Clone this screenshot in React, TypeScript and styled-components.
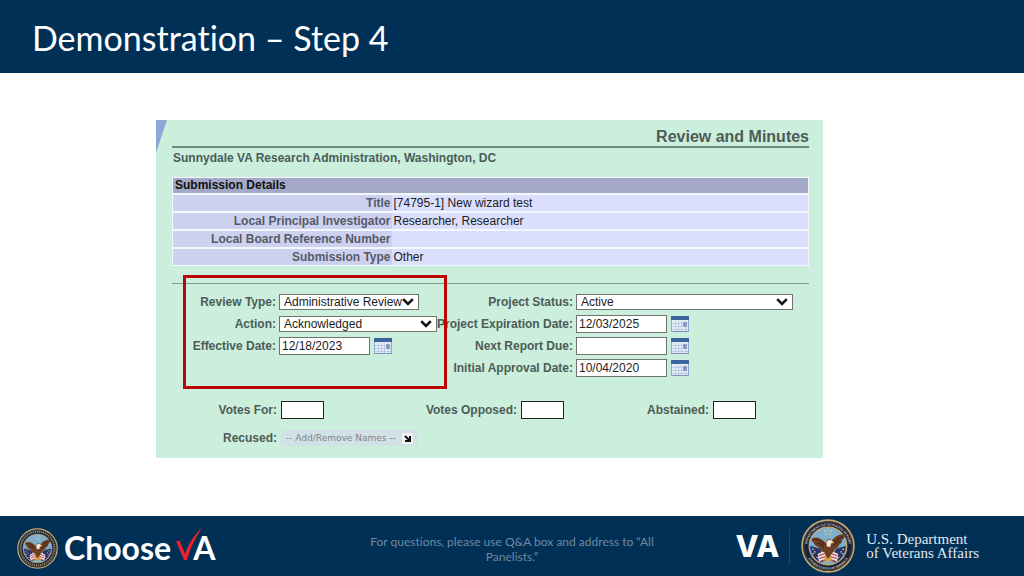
import React, { useId } from "react";
import styled, { createGlobalStyle } from "styled-components";

const navy = "#003056";
const sans = '"Liberation Sans", Arial, sans-serif';
const humanist = "Lato, Calibri, sans-serif";

const GlobalStyle = createGlobalStyle`
  * { box-sizing: border-box; }
  body { margin: 0; background: #fff; font-family: ${sans}; font-variant-ligatures: none; }
`;

const Slide = styled.div`
  min-height: 100vh;
  display: flex;
  flex-direction: column;
`;

const TitleBar = styled.header`
  background: ${navy};
  padding: 14px 32px 11px;
`;

const SlideTitle = styled.h1`
  margin: 0;
  color: #fff;
  font-family: ${humanist};
  font-size: 34px;
  font-weight: 400;
  line-height: 48px;
`;

const Stage = styled.main`
  flex: 1;
  padding: 47px 201px 57px 156px;
`;

const Panel = styled.section`
  position: relative;
  background: #cbeedd;
  padding: 8px 14px 12px 16px;
  color: #4d5c56;
  font-size: 12px;
  line-height: 16px;
`;

const Corner = styled.svg`
  position: absolute;
  left: 0;
  top: 0;
`;

const PanelTitle = styled.h2`
  margin: 0;
  border-bottom: 2px solid #6f8a7e;
  text-align: right;
  font-size: 16px;
  line-height: 18px;
`;

const Organisation = styled.p`
  margin: 2px 0 11px 1px;
  font-weight: 700;
  line-height: 16px;
`;

const Details = styled.table`
  width: 100%;
  border-collapse: collapse;
  border: 1px solid #f4f8fd;
  line-height: 16px;
  caption {
    background: #a3a9c6;
    border: 1px solid #f4f8fd;
    border-bottom: 0;
    padding: 0 2px;
    color: #111;
    font-weight: 700;
    line-height: 15px;
    text-align: left;
  }
  tr { border-top: 2px solid #f4f8fd; }
  th {
    width: 219px;
    padding: 0 1px;
    background: #cdd1f0;
    color: #555a66;
    text-align: right;
  }
  td {
    padding: 0 2px;
    background: #d9dffd;
    color: #1c1c22;
  }
`;

const Rule = styled.hr`
  margin: 17px 0 9px;
  border: 0;
  border-top: 1px solid #84998f;
`;

const Review = styled.form``;

const Columns = styled.div`
  display: flex;
`;

const FieldGroup = styled.div<{ $label: number }>`
  display: grid;
  grid-template-columns: ${(p) => p.$label}px auto;
  grid-auto-rows: 18px;
  gap: 4px 3px;
  align-content: start;
  align-items: center;
`;

const MarkedGroup = styled(FieldGroup)`
  position: relative;
  &::after {
    content: "";
    position: absolute;
    inset: -18px -10px -12px 11px;
    border: 3px solid #bb0505;
    pointer-events: none;
    z-index: 1;
  }
`;

const Label = styled.label`
  text-align: right;
  font-weight: 700;
  white-space: nowrap;
`;

const Control = styled.div`
  display: flex;
  align-items: center;
  gap: 4px;
`;

const SelectBox = styled.div<{ $width: number }>`
  position: relative;
  width: ${(p) => p.$width}px;
  svg {
    position: absolute;
    right: 5px;
    top: 4px;
    pointer-events: none;
  }
`;

const Select = styled.select`
  display: block;
  appearance: none;
  width: 100%;
  height: 16px;
  padding: 0 4px;
  border: 1px solid #6d7571;
  border-radius: 0;
  background: #fff;
  color: #1c1c22;
  font: 12px/14px ${sans};
`;

const DateInput = styled.input`
  width: 91px;
  height: 18px;
  padding: 0 2px;
  border: 1px solid #6d7571;
  background: #fff;
  color: #1c1c22;
  font: 12px/16px ${sans};
`;

const CalendarButton = styled.button`
  display: block;
  padding: 0;
  border: 0;
  background: none;
  svg { display: block; }
`;

const Votes = styled.div`
  display: grid;
  grid-template-columns: 105px 43px 189px 43px 141px 43px;
  column-gap: 4px;
  align-items: center;
  margin-top: 24px;
`;

const VoteInput = styled.input`
  width: 100%;
  height: 18px;
  border: 1px solid #1d2421;
  background: #fff;
  font: 12px/16px ${sans};
`;

const Recused = styled.div`
  display: grid;
  grid-template-columns: 105px auto;
  column-gap: 4px;
  align-items: center;
  justify-content: start;
  margin-top: 11px;
`;

const NamesButton = styled.button`
  display: flex;
  align-items: center;
  gap: 6px;
  height: 16px;
  padding: 0 5px;
  border: 0;
  background: #d2e1e6;
  color: #7d8790;
  font: 9px/12px "DejaVu Sans", Verdana, sans-serif;
`;

const Footer = styled.footer`
  display: grid;
  grid-template-columns: 1fr 300px 1fr;
  align-items: center;
  height: 60px;
  background: ${navy};
  color: #fff;
`;

const Brand = styled.div`
  display: flex;
  align-items: center;
  padding: 4px 0 0 17px;
`;

const ChooseMark = styled.div`
  display: flex;
  align-items: center;
  margin-left: 6px;
  font-family: ${humanist};
  font-size: 32px;
  font-weight: 700;
  line-height: 36px;
  svg { margin: -8px -11px 0 3px; }
`;

const Note = styled.p`
  margin: 6px 0 0;
  color: #7089a0;
  text-align: center;
  font-family: ${humanist};
  font-size: 12px;
  line-height: 15px;
`;

const Agency = styled.div`
  display: flex;
  align-items: center;
  justify-content: flex-end;
  padding-right: 45px;
  white-space: nowrap;
`;

const Initials = styled.span`
  font: 800 30px/36px Inter, sans-serif;
`;

const Divider = styled.span`
  width: 1px;
  height: 35px;
  margin: 0 11px 0 10px;
  background: #1f4a6d;
`;

const AgencyName = styled.span`
  display: flex;
  flex-direction: column;
  margin-left: 11px;
  color: #e3e9ef;
  font: 15px/14px "Liberation Serif", serif;
`;

const Chevron = () => (
  <svg width="12" height="8" viewBox="0 0 12 8" aria-hidden="true">
    <path d="M1.2 1.2 6 6l4.800-4.800" fill="none" stroke="#111" strokeWidth="2.600" />
  </svg>
);

const Calendar = ({ label }: { label: string }) => (
  <CalendarButton type="button" aria-label={label}>
    <svg width="18" height="16" viewBox="0 0 18 16">
      <rect x=".5" y=".5" width="17" height="15" fill="#e8eef8" stroke="#8fa9cf" />
      <rect width="18" height="4" fill="#3d659c" />
      <path d="M1 7.500h16M1 10.500h16M1 13.500h16M4.500 5v10M7.500 5v10M10.500 5v10M14.500 5v10" stroke="#bccbe3" />
      <path d="M12 6h4v5h-4z" fill="#8fa3cc" />
      <path d="M13.500 7v3" stroke="#6b80b0" />
      <path d="M0 15.500h18" stroke="#7d93b8" />
    </svg>
  </CalendarButton>
);

const Seal = ({ size, lettered = false }: { size: number; lettered?: boolean }) => {
  const id = useId();
  return (
    <svg width={size} height={size} viewBox="0 0 100 100" role="img" aria-label="Department of Veterans Affairs seal">
      <defs>
        <path id={`${id}t`} d="M11.600 58A39 39 0 1 1 88.400 58" />
        <path id={`${id}b`} d="M8.200 62A43.500 43.500 0 0 0 91.800 62" />
      </defs>
      <circle cx="50" cy="50" r="48" fill="#17233f" stroke="#c9a768" strokeWidth="3" />
      <circle cx="50" cy="50" r="45" fill="none" stroke="#6f6141" strokeWidth="1" />
      <circle cx="50" cy="50" r="35" fill="#7fb0cb" stroke="#c9a768" strokeWidth="2" />
      {lettered ? (
        <g fill="#e6d5aa" fontFamily="Liberation Serif, serif" fontWeight="700" fontSize="6">
          <text><textPath href={`#${id}t`} startOffset="50%" textAnchor="middle">DEPARTMENT OF VETERANS AFFAIRS</textPath></text>
          <text><textPath href={`#${id}b`} startOffset="50%" textAnchor="middle">UNITED STATES OF AMERICA</textPath></text>
        </g>
      ) : (
        <circle cx="50" cy="50" r="41" fill="none" stroke="#8f835f" strokeWidth="5" strokeDasharray="3 2" />
      )}
      <path d="M18 50l17 5 11 21-10 5C25 75 18 64 17 52z" fill="#2d3566" />
      <path d="M82 50l-17 5-11 21 10 5c11-6 18-17 19-29z" fill="#2d3566" />
      <path d="M31 65l16-8 2 19-16 3zM69 65l-16-8-2 19 16 3z" fill="#e9dedb" />
      <path d="M33 68l14-5M34 73l13-4M36 78l12-3M67 68l-14-5M66 73l-13-4M64 78l-12-3" stroke="#bd3948" strokeWidth="2" />
      <path d="M21 55l2 2M25 60l2 2M22 63l2 2M79 55l-2 2M75 60l-2 2M78 63l-2 2M29 71l2 1M71 71l-2 1" stroke="#dfe4f3" strokeWidth="2" />
      <path d="M43 21l2 2M50 18v3M57 21l-2 2M46 28h2M53 28h2" stroke="#e9dd8c" strokeWidth="2" />
      <path d="M20 36c9-4 18 0 25 8l3-5c3-3 7-2 9 1 5-7 15-14 25-11-1 5-3 8-6 10 1 3-1 6-5 8-1 4-4 7-8 8-1 4-3 7-6 8l-4 10-6-1-3-10c-7-2-10-5-12-10-5-2-8-5-9-9-3-2-4-4-3-7z" fill="#6b3f23" />
      <path d="M25 38c8 0 14 4 18 10M30 45c5 0 9 3 12 7M78 33c-9 2-15 7-18 13M73 41c-6 1-10 4-13 9" fill="none" stroke="#3f2415" strokeWidth="2" />
      <path d="M47 43c1-5 7-6 10-3l4 4-5 1-2 7-6-1z" fill="#f1e6d2" />
      <path d="M58 41l5 4-5 0z" fill="#dfa633" />
      <path d="M45 67l5 7 5-7 2 5-5 8h-4l-5-8z" fill="#d6a03a" />
    </svg>
  );
};

const Picker = ({ id, width, value }: { id: string; width: number; value: string }) => (
  <SelectBox $width={width}>
    <Select id={id} defaultValue={value}>
      <option>{value}</option>
    </Select>
    <Chevron />
  </SelectBox>
);

const DateField = ({ id, value = "", label }: { id: string; value?: string; label: string }) => (
  <>
    <Label htmlFor={id}>{label}:</Label>
    <Control>
      <DateInput id={id} type="text" defaultValue={value} />
      <Calendar label={`Choose ${label}`} />
    </Control>
  </>
);

const details = [
  ["Title", "[74795-1] New wizard test"],
  ["Local Principal Investigator", "Researcher, Researcher"],
  ["Local Board Reference Number", ""],
  ["Submission Type", "Other"],
];

export default function App() {
  return (
    <Slide>
      <GlobalStyle />
      <TitleBar>
        <SlideTitle>Demonstration – Step 4</SlideTitle>
      </TitleBar>
      <Stage>
        <Panel>
          <Corner width="11" height="33" viewBox="0 0 11 33" aria-hidden="true">
            <path d="M0 0h11L0 33z" fill="#8fa9d6" />
          </Corner>
          <PanelTitle>Review and Minutes</PanelTitle>
          <Organisation>Sunnydale VA Research Administration, Washington, DC</Organisation>
          <Details>
            <caption>Submission Details</caption>
            <tbody>
              {details.map(([name, value]) => (
                <tr key={name}>
                  <th scope="row">{name}</th>
                  <td>{value}</td>
                </tr>
              ))}
            </tbody>
          </Details>
          <Rule />
          <Review>
            <Columns>
              <MarkedGroup $label={104}>
                <Label htmlFor="review-type">Review Type:</Label>
                <Picker id="review-type" width={140} value="Administrative Review" />
                <Label htmlFor="action">Action:</Label>
                <Picker id="action" width={158} value="Acknowledged" />
                <DateField id="effective" label="Effective Date" value="12/18/2023" />
              </MarkedGroup>
              <FieldGroup $label={136}>
                <Label htmlFor="status">Project Status:</Label>
                <Picker id="status" width={217} value="Active" />
                <DateField id="expiration" label="Project Expiration Date" value="12/03/2025" />
                <DateField id="next-report" label="Next Report Due" />
                <DateField id="approval" label="Initial Approval Date" value="10/04/2020" />
              </FieldGroup>
            </Columns>
            <Votes>
              <Label htmlFor="votes-for">Votes For:</Label>
              <VoteInput id="votes-for" />
              <Label htmlFor="votes-opposed">Votes Opposed:</Label>
              <VoteInput id="votes-opposed" />
              <Label htmlFor="abstained">Abstained:</Label>
              <VoteInput id="abstained" />
            </Votes>
            <Recused>
              <Label htmlFor="recused">Recused:</Label>
              <NamesButton id="recused" type="button">
                -- Add/Remove Names --
                <svg width="11" height="11" viewBox="0 0 11 11" aria-hidden="true">
                  <rect width="11" height="11" fill="#f1f3f2" />
                  <path d="M3 3l4 4M8 3v5H3" fill="none" stroke="#111" strokeWidth="2" />
                </svg>
              </NamesButton>
            </Recused>
          </Review>
        </Panel>
      </Stage>
      <Footer>
        <Brand>
          <Seal size={41} />
          <ChooseMark>
            <span>Choose</span>
            <svg width="30" height="34" viewBox="0 0 30 34" role="img" aria-label="V">
              <path d="M2 14h4l5 13C15 16 20 8 28 1 22 10 17 19 13 33h-3z" fill="#e9232d" />
            </svg>
            <span>A</span>
          </ChooseMark>
        </Brand>
        <Note>For questions, please use Q&amp;A box and address to “All Panelists.”</Note>
        <Agency>
          <Initials>VA</Initials>
          <Divider />
          <Seal size={54} lettered />
          <AgencyName>
            <span>U.S. Department</span>
            <span>of Veterans Affairs</span>
          </AgencyName>
        </Agency>
      </Footer>
    </Slide>
  );
}
